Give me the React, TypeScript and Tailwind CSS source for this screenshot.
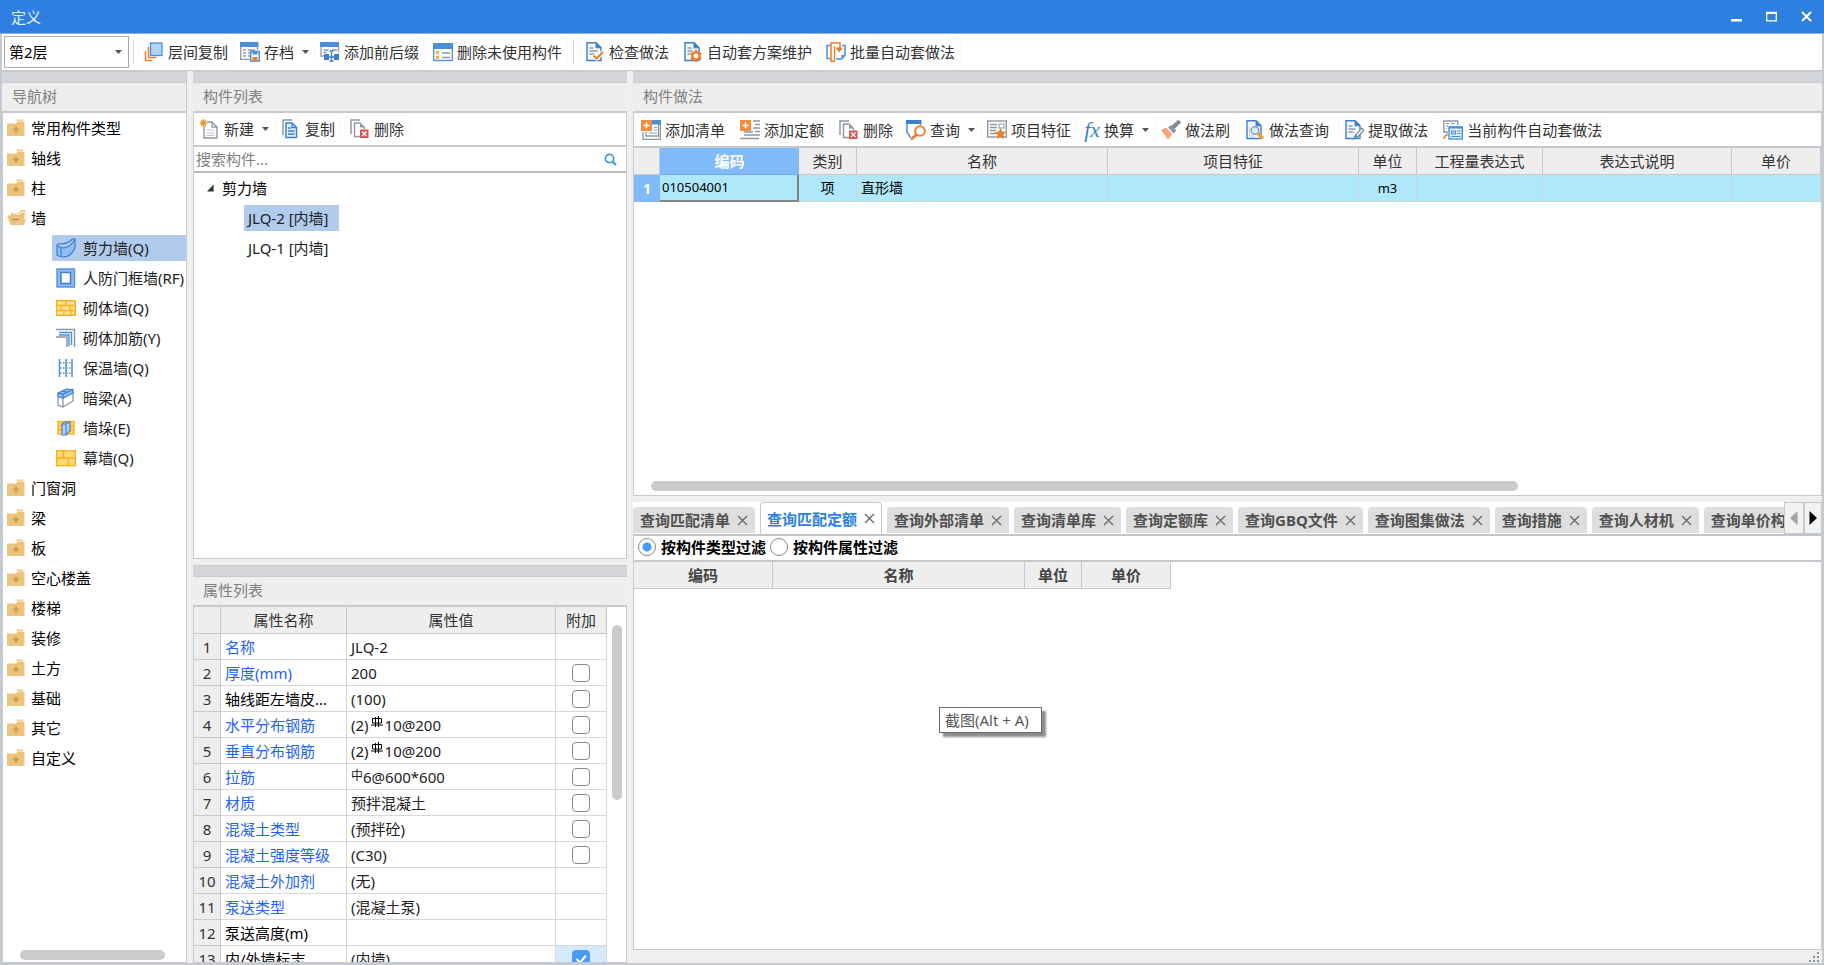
import { ReactNode, useState } from "react";

const Svg = ({ children }: { children: ReactNode }) => (
  <svg viewBox="0 0 20 20" className="w-5 h-5 shrink-0" fill="none" aria-hidden="true">
    {children}
  </svg>
);

/* ---------- toolbar icons ---------- */

const LayerCopyIcon = () => (
  <Svg>
    <path d="M1.500 9v9.500h6.500" stroke="#ee7d2c" strokeWidth="1.500" />
    <path d="M4.500 5v10.500h8" stroke="#ee7d2c" strokeWidth="1.500" />
    <rect x="6.500" y="1" width="11.500" height="12.500" fill="#b5d3fa" stroke="#4a8fdc" strokeWidth="1.300" />
  </Svg>
);

const ArchiveIcon = () => (
  <Svg>
    <path d="M.7 5v12.300h9M17.500 5v3" stroke="#8d99a5" strokeWidth="1.300" />
    <rect x="0" y="0" width="18.500" height="5" fill="#4a8fdc" />
    <path d="M3 8h3M8 8h7M3 11h3M8 11h2M3 14h3M8 14h2" stroke="#8d99a5" strokeWidth="1.300" />
    <path d="M10.700 9.500h8.600v9.500h-8.600z" fill="#fff" stroke="#4a8fdc" strokeWidth="1.500" />
    <path d="M12.500 9.500h5v3h-5z" fill="#4a8fdc" />
    <path d="M12.500 15h5v4h-5z" fill="#ee7d2c" />
  </Svg>
);

const AffixIcon = () => (
  <Svg>
    <path d="M1 5v9h3M18.500 5v5" stroke="#8d99a5" strokeWidth="1.300" />
    <rect x="0" y="0" width="19" height="5" fill="#4a8fdc" />
    <path d="M3.500 8h5M12 8h5M3.500 10.500h3" stroke="#8d99a5" strokeWidth="1.300" />
    <path d="M4 12h5v6H4zM14 12h5v6h-5z" fill="#3c7fcf" />
    <path d="M9.500 9h4M9.500 19h4M11.500 9v10M9 15h5" stroke="#3c7fcf" strokeWidth="1.300" />
  </Svg>
);

const UnusedIcon = () => (
  <Svg>
    <rect x=".7" y="2" width="18.600" height="16.500" stroke="#4a8fdc" strokeWidth="1.300" />
    <rect x="0" y="1" width="20" height="6" fill="#4a8fdc" />
    <path d="M3 9l3 3M6 9l-3 3M3 14l3 3M6 14l-3 3" stroke="#f29a3a" strokeWidth="1.300" />
    <path d="M9 11h8M9 15.500h8" stroke="#8d99a5" strokeWidth="1.500" />
  </Svg>
);

const BluePage = () => (
  <>
    <path d="M2 .8h9l5 5V18.500H2z" fill="#f3f8fe" stroke="#3c7fcf" strokeWidth="1.400" />
    <path d="M11 .8v5h5z" fill="#3c7fcf" stroke="#3c7fcf" />
  </>
);

const CheckDocIcon = () => (
  <Svg>
    <BluePage />
    <path d="M4.500 6h4M4.500 9h8M4.500 12h5" stroke="#8d99a5" strokeWidth="1.300" />
    <path d="M8 13l3.500 3.500L18 10" stroke="#fff" strokeWidth="4" />
    <path d="M8.500 13.500l3 3 6.500-6.500" stroke="#ee7d2c" strokeWidth="2" />
  </Svg>
);

const GearDocIcon = () => (
  <Svg>
    <BluePage />
    <path d="M4.500 6h4M4.500 9h5M4.500 12h3" stroke="#8d99a5" strokeWidth="1.300" />
    <circle cx="13" cy="14" r="3.600" fill="#fff" stroke="#ee7d2c" strokeWidth="2.400" />
    <path
      d="M13 8v2M13 18v2M7.800 11l1.800 1M16.400 16l1.800 1M7.800 17l1.800-1M16.400 12l1.800-1"
      stroke="#ee7d2c"
      strokeWidth="2.400"
    />
  </Svg>
);

const BatchIcon = () => (
  <Svg>
    <path d="M4 3.500H1v13h3M16 3.500h3v10l-3.500 3.500H10" stroke="#4a8fdc" strokeWidth="1.500" />
    <path d="M15.500 17v-4H19z" fill="#4a8fdc" />
    <path d="M9 19.200H5V1h9v5" stroke="#ee7d2c" strokeWidth="1.600" />
    <path d="M8.500 4v15.500" stroke="#ee7d2c" strokeWidth="1.300" />
    <path d="M9.500 5.500h7.500l-3.800 5z" fill="#ee7d2c" />
  </Svg>
);

const NewIcon = () => (
  <Svg>
    <path d="M4 3h8l5 5v11H4z" fill="#fff" stroke="#8d99a5" strokeWidth="1.400" />
    <path d="M12 3v5h5" stroke="#8d99a5" strokeWidth="1.300" />
    <path d="M6.500 11h8M6.500 14h8M6.500 16.500h8" stroke="#c3c9cf" />
    <path d="M0 1h7v6H0z" fill="#fff" />
    <path d="M3.500 0v8M0 4h7M1 1.200l5 5.600M6 1.200L1 6.800" stroke="#f2952c" strokeWidth="1.400" />
  </Svg>
);

const CopyIcon = () => (
  <Svg>
    <path d="M2 16V1h9" stroke="#8d99a5" strokeWidth="1.500" />
    <path d="M5 4h6l4.500 4.500V18.500H5z" fill="#e4f0fe" stroke="#3c7fcf" strokeWidth="1.500" />
    <path d="M11 4v4.500h4.500" stroke="#3c7fcf" strokeWidth="1.300" />
    <path d="M7 9h3M7 12h6.500M7 15h6.500" stroke="#3c7fcf" strokeWidth="1.300" />
  </Svg>
);

const DeleteIcon = () => (
  <Svg>
    <path d="M1 15V1h9" stroke="#8d99a5" strokeWidth="1.500" />
    <path d="M10 17.500H4.500V4H10l4.500 4.500V10" fill="#fff" stroke="#8d99a5" strokeWidth="1.400" />
    <path d="M10 4v4.500h4.500z" fill="#8d99a5" />
    <rect x="10" y="10.500" width="8.500" height="8.500" fill="#d9534f" />
    <path d="M12 12.500l4.500 4.500M16.500 12.500L12 17" stroke="#fff" strokeWidth="1.300" />
  </Svg>
);

const AddListIcon = () => (
  <Svg>
    <path d="M8 1h9.500v15H5v-4" fill="#fff" stroke="#8d99a5" strokeWidth="1.300" />
    <path d="M2 12v7.300h17.300V4" stroke="#8d99a5" strokeWidth="1.300" />
    <path d="M11 0h9v4.500h-9z" fill="#4a8fdc" />
    <path d="M13 7.500h3M13 10h3M8 13h8" stroke="#8d99a5" />
    <rect x="0" y="0" width="11" height="11" fill="#ee8f3c" />
    <path d="M5.500 2.500v6M2.500 5.500h6" stroke="#fff" strokeWidth="1.500" />
  </Svg>
);

const AddQuotaIcon = () => (
  <Svg>
    <path
      d="M13 1h7M15 4.500h5M13 8h7M15 11.500h5M4 15h16M0 18.500h19M4 12h9"
      stroke="#8d99a5"
      strokeWidth="1.400"
    />
    <rect x="0" y="0" width="11" height="11" fill="#ee8f3c" />
    <path d="M5.500 2.500v6M2.500 5.500h6" stroke="#fff" strokeWidth="1.500" />
  </Svg>
);

const QueryIcon = () => (
  <Svg>
    <path d="M1 4v8l3.500 5.500M14.500 4v1" stroke="#4a8fdc" strokeWidth="1.500" />
    <rect x="0" y="0" width="15.500" height="4" fill="#3c7fcf" />
    <circle cx="14" cy="11" r="4.800" fill="#fff" stroke="#ee7d2c" strokeWidth="2" />
    <path d="M10.500 14.500L5 19.500" stroke="#ee7d2c" strokeWidth="2.800" />
  </Svg>
);

const FeatureIcon = () => (
  <Svg>
    <rect x=".7" y="1" width="18.600" height="16" stroke="#8d99a5" strokeWidth="1.400" />
    <path d="M3 4.500h7M3 7.500h7M3 10.500h6M3 13.500h6" stroke="#8d99a5" strokeWidth="1.300" />
    <rect x="12" y="4" width="5" height="4" stroke="#8d99a5" />
    <path
      d="M13.500 8l1.700 3.600 4 .5-2.900 2.800.7 4-3.500-1.900-3.500 1.900.7-4-2.900-2.800 4-.5z"
      fill="#ee7d2c"
    />
  </Svg>
);

const FxIcon = () => (
  <span className="w-4 text-center font-['Liberation_Serif',serif] italic text-[22px] leading-5 text-[#3c7fcf]" aria-hidden="true">
    fx
  </span>
);

const BrushIcon = () => (
  <Svg>
    <path d="M0 10l5-2.500 6.500 6.500L7 19.500 4.500 16z" fill="#fba37c" />
    <path d="M7 7.500l3-2.500 5.500 5.500-3 3z" fill="#8d99a5" />
    <path d="M12 7.500l4-4" stroke="#7d8893" strokeWidth="4" />
    <circle cx="17.300" cy="2.500" r="2.300" fill="#7d8893" />
    <path d="M5.500 7.500l6.500 6.500" stroke="#fff" />
  </Svg>
);

const SearchDocIcon = () => (
  <Svg>
    <BluePage />
    <circle cx="10" cy="10.500" r="3.800" fill="#dcebfc" stroke="#8d99a5" strokeWidth="1.400" />
    <path d="M4.500 7v9h5" stroke="#c3c9cf" />
    <path d="M13 13.500l5 5" stroke="#f2a02c" strokeWidth="3.200" />
  </Svg>
);

const ExtractIcon = () => (
  <Svg>
    <BluePage />
    <path d="M4.500 6h4M4.500 9h7M4.500 12h5" stroke="#8d99a5" strokeWidth="1.300" />
    <path d="M10 19l1.500-4L18 8l2 2-6.500 7z" fill="#fff" stroke="#7d8893" strokeWidth="1.200" />
    <path d="M8 19.500l4-5 2 2z" fill="#2aa5b8" />
  </Svg>
);

const AutoIcon = () => (
  <Svg>
    <path d="M5 12H.8V1h14v4" stroke="#8d99a5" strokeWidth="1.400" />
    <path d="M3 3.500h3M8 3.500h4M3 6h2M3 8.500h1" stroke="#8d99a5" strokeWidth="1.200" />
    <rect x="6" y="7" width="13.300" height="12" fill="#e4f0fe" stroke="#4a8fdc" strokeWidth="1.400" />
    <path d="M6 7.500h13" stroke="#4a8fdc" strokeWidth="2" />
    <rect x="8.500" y="11" width="4" height="3" fill="#b5d3fa" stroke="#4a8fdc" />
    <path d="M14 11h3.500M14 13.500h3.500M8 16.500h9.500" stroke="#4a8fdc" strokeWidth="1.100" />
    <path d="M1 19c0-2 1-3.500 3-4v-1.500" stroke="#ee7d2c" strokeWidth="1.400" />
  </Svg>
);

/* ---------- tree icons ---------- */

const FolderIcon = ({ open }: { open?: boolean }) => (
  <svg viewBox="0 0 20 18" className="w-5 h-[18px] shrink-0" fill="none" aria-hidden="true">
    {open ? (
      <>
        <path d="M4 4h8l2-3h4.500v11l-2 4H4z" fill="#e9bf78" />
        <path d="M5.500 5h8l1.500-2h3v8" stroke="#fff6e2" strokeWidth="1.200" />
        <path d="M0 6.500h16l1.500 9.500h-14z" fill="#ecc47e" />
        <path d="M5 10.500h7" stroke="#b98d3c" strokeWidth="1.500" />
      </>
    ) : (
      <>
        <path d="M0 4.500h9l1.500-2h7V17H0z" fill="#ecc47e" />
        <path d="M9.500 1.200h6.500" stroke="#ecc47e" strokeWidth="1.300" />
        <path d="M9 7.500v6M6 10.500h6" stroke="#c8973f" strokeWidth="1.700" />
      </>
    )}
  </svg>
);

const ShearWallIcon = () => (
  <Svg>
    <path
      d="M1 7.500c3 2 5 2.500 6.500 2.500C13 9.500 16.500 6 19 1v8.500c-2 5-6 9.500-12 9.500-2 0-4-.5-6-2z"
      fill="#8fc0f5"
      stroke="#3c7fcf"
      strokeWidth="1.200"
    />
    <path d="M1 7.500L3 5.500c5 1 10-1 13.500-4.500L19 1" stroke="#3c7fcf" strokeWidth="1.200" />
    <path d="M5 10v8.500" stroke="#3c7fcf" strokeWidth="1.200" />
  </Svg>
);

const DoorFrameIcon = () => (
  <Svg>
    <rect x="1" y="1" width="17.500" height="18" fill="#8fb9ee" stroke="#5b95de" strokeWidth="1.500" />
    <rect x="5" y="4.500" width="9.500" height="11" fill="#fff" stroke="#3c7fcf" strokeWidth="1.500" />
  </Svg>
);

const BrickIcon = () => (
  <Svg>
    <rect x=".7" y="2.700" width="18.600" height="14.600" fill="#ffe199" stroke="#fbb117" strokeWidth="1.400" />
    <path
      d="M1 7.500h18M1 12.500h18M10 3v4.500M5 7.500v5M14 7.500v5M8 12.500V17M15 12.500V17"
      stroke="#fbb117"
      strokeWidth="1.400"
    />
  </Svg>
);

const RebarIcon = () => (
  <Svg>
    <path d="M0 1.500h18.500V19M0 9h11v10" stroke="#8d99a5" strokeWidth="1.500" />
    <path d="M3 4.500h12.500V17M3 7h10v11" stroke="#4a8fdc" strokeWidth="1.400" />
  </Svg>
);

const InsulationIcon = () => (
  <Svg>
    <path d="M3.500 1v18M10 1v18M16 1v18" stroke="#4a8fdc" strokeWidth="1.500" />
    <path d="M4 5h12M4 10h12M4 15h12" stroke="#4a8fdc" strokeDasharray="1.500 1.500" strokeWidth="1.300" />
  </Svg>
);

const BeamIcon = () => (
  <Svg>
    <path d="M2 7l5 1.500V19l-5-2zM7 19l10-6V4" fill="#fff" stroke="#8d99a5" strokeWidth="1.300" />
    <path d="M2 5l8-4 7 .5V5L7 10 2 8.500z" fill="#8fc0f5" stroke="#3c7fcf" strokeWidth="1.200" />
    <path d="M2 5l5 1 10-4.500M7 6v4M6 3l5 1" stroke="#3c7fcf" strokeWidth="1.200" />
  </Svg>
);

const PierIcon = () => (
  <Svg>
    <rect x="2" y="3.500" width="16" height="12.500" fill="#ffd977" stroke="#fbb117" strokeWidth="1.400" />
    <path d="M2 8h16M2 12h16" stroke="#fbb117" strokeWidth="1.400" />
    <path d="M6 6l3-2h5v9l-4 4H6z" fill="#b8d6fa" stroke="#3c7fcf" strokeWidth="1.200" />
    <path d="M6 6h4l4-2M10 6v11" stroke="#3c7fcf" strokeWidth="1.200" />
  </Svg>
);

const CurtainIcon = () => (
  <Svg>
    <rect x=".7" y="2.700" width="18.600" height="15" fill="#ffd977" stroke="#fbb117" strokeWidth="1.400" />
    <path d="M1 10h18M7.500 3v7M12.500 10v7.500" stroke="#fbb117" strokeWidth="1.500" />
  </Svg>
);

/* HRB400 bar sign, has no unicode code point */
const Rebar3 = () => (
  <svg
    viewBox="0 0 12 12"
    className="inline-block w-3 h-3 mx-0.5 mb-2"
    fill="none"
    stroke="#000"
    role="img"
    aria-label="HRB400"
  >
    <path d="M1.500 2.500h9v4.500h-9zM4.500 1v10M7.500 0v11M0 9h12" />
  </svg>
);

const Caret = () => (
  <svg viewBox="0 0 7 4" className="ml-1 w-[7px] h-1 shrink-0" aria-hidden="true">
    <path d="M0 0h7L3.500 4z" fill="#555" />
  </svg>
);

type ToolProps = { icon: ReactNode; label: string; menu?: boolean };

const Tool = ({ icon, label, menu }: ToolProps) => (
  <button
    type="button"
    className={
      menu
        ? "flex items-center gap-1 h-[26px] pl-1 pr-[3px] whitespace-nowrap shrink-0"
        : "flex items-center gap-1 h-[26px] px-[5px] border border-[#f8f8f8] rounded-sm whitespace-nowrap shrink-0"
    }
  >
    {icon}
    {label}
    {menu && <Caret />}
  </button>
);

const PanelTitle = ({ title }: { title: string }) => (
  <div className="shrink-0">
    <div className="h-3 bg-[#d3d5db] border-y border-[#c8cacf]" />
    <h2 className="h-[30px] pl-2.5 leading-[27px] bg-[#eeeeee] text-[#808080] border-b-2 border-[#c6c9cd]">{title}</h2>
  </div>
);

const wallChildren = [
  { label: "剪力墙(Q)", icon: <ShearWallIcon /> },
  { label: "人防门框墙(RF)", icon: <DoorFrameIcon /> },
  { label: "砌体墙(Q)", icon: <BrickIcon /> },
  { label: "砌体加筋(Y)", icon: <RebarIcon /> },
  { label: "保温墙(Q)", icon: <InsulationIcon /> },
  { label: "暗梁(A)", icon: <BeamIcon /> },
  { label: "墙垛(E)", icon: <PierIcon /> },
  { label: "幕墙(Q)", icon: <CurtainIcon /> },
];

const navItems = [
  "常用构件类型",
  "轴线",
  "柱",
  "墙",
  "门窗洞",
  "梁",
  "板",
  "空心楼盖",
  "楼梯",
  "装修",
  "土方",
  "基础",
  "其它",
  "自定义",
];

type Prop = { name: string; value: ReactNode; black?: boolean; extra?: boolean };

const props: Prop[] = [
  { name: "名称", value: "JLQ-2" },
  { name: "厚度(mm)", value: "200", extra: false },
  { name: "轴线距左墙皮...", value: "(100)", black: true, extra: false },
  { name: "水平分布钢筋", value: <>(2)<Rebar3 />10@200</>, extra: false },
  { name: "垂直分布钢筋", value: <>(2)<Rebar3 />10@200</>, extra: false },
  { name: "拉筋", value: <><span className="text-xs align-[3px]">中</span>6@600*600</>, extra: false },
  { name: "材质", value: "预拌混凝土", extra: false },
  { name: "混凝土类型", value: "(预拌砼)", extra: false },
  { name: "混凝土强度等级", value: "(C30)", extra: false },
  { name: "混凝土外加剂", value: "(无)" },
  { name: "泵送类型", value: "(混凝土泵)" },
  { name: "泵送高度(m)", value: "", black: true },
  { name: "内/外墙标志", value: "(内墙)", black: true, extra: true },
];

const tabs = [
  "查询匹配清单",
  "查询匹配定额",
  "查询外部清单",
  "查询清单库",
  "查询定额库",
  "查询GBQ文件",
  "查询图集做法",
  "查询措施",
  "查询人材机",
  "查询单价构成",
];

const NavTree = () => {
  const [active, setActive] = useState("剪力墙(Q)");
  return (
    <nav className="w-[185px] shrink-0 flex flex-col border-r border-[#c6c9cd]">
      <PanelTitle title="导航树" />
      <ul className="flex-1 min-h-0 overflow-hidden bg-white border-l border-[#c6c9cd]">
        {navItems.map((item) => (
          <li key={item}>
            <button type="button" className="flex items-center w-full h-[30px] pl-1 gap-1 text-black">
              <FolderIcon open={item === "墙"} />
              {item}
            </button>
            {item === "墙" && (
              <ul className="pl-[49px]">
                {wallChildren.map((child) => (
                  <li key={child.label} className="h-[30px] py-0.5">
                    <button
                      type="button"
                      onClick={() => setActive(child.label)}
                      className={`flex items-center w-full h-[26px] pl-1 gap-[7px] whitespace-nowrap text-[#222] ${
                        active === child.label ? "bg-[#b1cbed]" : ""
                      }`}
                    >
                      {child.icon}
                      {child.label}
                    </button>
                  </li>
                ))}
              </ul>
            )}
          </li>
        ))}
      </ul>
      <div className="shrink-0 bg-white pl-[17px] pr-[21px] pb-0.5 border-l border-b border-[#c6c9cd]">
        <div className="h-2.5 rounded-full bg-[#cbcbcb]" />
      </div>
    </nav>
  );
};

const ComponentList = () => (
  <section className="h-[488px] shrink-0 flex flex-col">
    <PanelTitle title="构件列表" />
    <div className="flex-1 bg-white border border-t-0 border-[#c6c9cd]">
      <div className="flex items-center gap-[3px] h-[34px] pl-0.5 border-b-2 border-[#c6c9cd]">
        <Tool icon={<NewIcon />} label="新建" menu />
        <Tool icon={<CopyIcon />} label="复制" />
        <Tool icon={<DeleteIcon />} label="删除" />
      </div>
      <div className="flex items-center h-[26px] pl-0.5 pr-[9px] border-b-2 border-[#b9bbbe]">
        <input
          aria-label="搜索构件"
          placeholder="搜索构件..."
          className="flex-1 min-w-0 outline-none placeholder:text-[#808080]"
        />
        <svg viewBox="0 0 13 13" className="w-[13px] h-[13px]" fill="none" stroke="#3d9ad1" aria-hidden="true">
          <circle cx="5.500" cy="5.500" r="4.200" strokeWidth="1.700" />
          <path d="M8.500 8.500l3.500 3.500" strokeWidth="2.200" />
        </svg>
      </div>
      <ul className="text-black">
        <li>
          <button type="button" className="flex items-center h-[30px] pl-[13px] gap-2">
            <svg viewBox="0 0 9 9" className="w-[7px] h-2" aria-hidden="true">
              <path d="M8.500 0v9H0z" fill="#333" />
            </svg>
            剪力墙
          </button>
          <ul className="pl-[50px]">
            <li className="h-[30px] py-0.5">
              <button type="button" className="h-[26px] pl-1 pr-2.5 bg-[#b1cbed] text-[#222]">
                JLQ-2 [内墙]
              </button>
            </li>
            <li className="h-[30px] py-0.5">
              <button type="button" className="h-[26px] pl-1 pr-2.5 text-[#222]">
                JLQ-1 [内墙]
              </button>
            </li>
          </ul>
        </li>
      </ul>
    </div>
  </section>
);

const propHead = "border-r border-b border-[#c6c9cd] p-0 font-normal";
const propCell = "border-r border-b border-[#d5d7da] p-0 whitespace-nowrap";

const PropertyList = () => {
  const [checked, setChecked] = useState(props.map((p) => p.extra === true));
  const toggle = (i: number) => {
    setChecked(checked.map((c, n) => (n === i ? !c : c)));
  };

  return (
    <section className="flex-1 min-h-0 flex flex-col">
      <PanelTitle title="属性列表" />
      <div className="flex-1 min-h-0 flex items-start overflow-hidden bg-white border-x border-b border-[#c6c9cd]">
        <table className="table-fixed w-[413px] shrink-0 border-separate border-spacing-0 text-[#333]">
          <colgroup>
            <col className="w-[27px]" />
            <col className="w-[126px]" />
            <col className="w-[209px]" />
            <col className="w-[51px]" />
          </colgroup>
          <thead>
            <tr className="h-[27px] bg-[#eeeeee]">
              <th className={propHead} />
              <th className={propHead}>属性名称</th>
              <th className={propHead}>属性值</th>
              <th className={propHead}>附加</th>
            </tr>
          </thead>
          <tbody>
            {props.map((p, i) => (
              <tr key={p.name} className="h-[26px]">
                <td className="border-r border-b border-[#c6c9cd] bg-[#eeeeee] p-0 text-center">{i + 1}</td>
                <td className={`${propCell} pl-1 ${p.black ? "text-black" : "text-[#2563f5]"}`}>{p.name}</td>
                <td className={`${propCell} pl-1 text-[#222]`}>
                  <div className="h-5 overflow-visible">{p.value}</div>
                </td>
                <td className={`${propCell} ${p.extra ? "bg-[#d6e8fc]" : ""}`}>
                  {p.extra !== undefined && (
                    <label className="relative block mx-auto w-[18px] h-[18px]">
                      <input
                        type="checkbox"
                        aria-label={p.name}
                        checked={checked[i]}
                        onChange={() => toggle(i)}
                        className="appearance-none block w-[18px] h-[18px] rounded border border-[#8a8a8a] bg-white checked:bg-[#4a9bf8] checked:border-[#4a9bf8]"
                      />
                      {checked[i] && (
                        <svg viewBox="0 0 18 18" className="absolute inset-0 pointer-events-none" fill="none" aria-hidden="true">
                          <path d="M4.500 9l3.500 3.500 6-7" stroke="#fff" strokeWidth="2" />
                        </svg>
                      )}
                    </label>
                  )}
                </td>
              </tr>
            ))}
          </tbody>
        </table>
        <div className="ml-[5px] mt-[18px] w-2.5 h-[175px] rounded-full bg-[#cbcbcb]" />
      </div>
    </section>
  );
};

const headCell = "border-r border-b border-[#c6c9cd] p-0 font-normal";
const bodyCell = "border-r border-b border-[#cdd6da] p-0";

const Practices = () => (
  <section className="h-[425px] shrink-0 flex flex-col">
    <PanelTitle title="构件做法" />
    <div className="flex-1 flex flex-col min-w-0 overflow-hidden bg-white border border-t-0 border-[#c6c9cd]">
      <div className="flex items-center gap-[3px] h-[35px] pl-px border-b-2 border-[#c6c9cd] shrink-0">
        <Tool icon={<AddListIcon />} label="添加清单" />
        <Tool icon={<AddQuotaIcon />} label="添加定额" />
        <Tool icon={<DeleteIcon />} label="删除" />
        <Tool icon={<QueryIcon />} label="查询" menu />
        <Tool icon={<FeatureIcon />} label="项目特征" />
        <Tool icon={<FxIcon />} label="换算" menu />
        <Tool icon={<BrushIcon />} label="做法刷" />
        <Tool icon={<SearchDocIcon />} label="做法查询" />
        <Tool icon={<ExtractIcon />} label="提取做法" />
        <Tool icon={<AutoIcon />} label="当前构件自动套做法" />
      </div>
      <table className="table-fixed w-full border-separate border-spacing-0">
        <colgroup>
          <col className="w-[26px]" />
          <col className="w-[139px]" />
          <col className="w-[58px]" />
          <col className="w-[251px]" />
          <col className="w-[251px]" />
          <col className="w-[58px]" />
          <col className="w-[126px]" />
          <col className="w-[189px]" />
          <col />
        </colgroup>
        <thead>
          <tr className="h-[27px] bg-[#eeeeee]">
            <th className={headCell} />
            <th className="p-0 bg-[#80bafa] border-b border-[#6fa9ec] text-white font-bold">编码</th>
            <th className={headCell}>类别</th>
            <th className={headCell}>名称</th>
            <th className={headCell}>项目特征</th>
            <th className={headCell}>单位</th>
            <th className={headCell}>工程量表达式</th>
            <th className={headCell}>表达式说明</th>
            <th className={headCell}>单价</th>
          </tr>
        </thead>
        <tbody>
          <tr className="h-[27px] bg-[#aee8fa] text-black text-sm">
            <td className="p-0 bg-[#80bafa] text-white text-center font-bold">1</td>
            <td className="p-0 pl-0.5 text-[13px] border-r-2 border-b-2 border-[#808488]">010504001</td>
            <td className={`${bodyCell} text-center`}>项</td>
            <td className={`${bodyCell} pl-1`}>直形墙</td>
            <td className={bodyCell} />
            <td className={`${bodyCell} text-center text-[13px]`}>m3</td>
            <td className={bodyCell} />
            <td className={bodyCell} />
            <td className={bodyCell} />
          </tr>
        </tbody>
      </table>
      <div className="mt-auto mb-1 ml-[17px] w-[73%] h-2.5 rounded-full bg-[#cbcbcb]" />
    </div>
  </section>
);

const QueryPanel = () => {
  const [tab, setTab] = useState("查询匹配定额");
  const [filter, setFilter] = useState("按构件类型过滤");

  return (
    <section className="flex-1 min-h-0 flex flex-col">
      <div className="flex h-[34px] shrink-0 bg-white border-b-2 border-[#c0c5cb]">
        <div role="tablist" className="flex-1 min-w-0 flex items-end gap-[5px] overflow-hidden">
          {tabs.map((t) => (
            <div
              key={t}
              className={
                t === tab
                  ? "flex items-center shrink-0 h-8 px-1.5 gap-[7px] bg-white border border-b-0 border-[#c6c9cd] rounded-t text-[#2b7fe3]"
                  : "flex items-center shrink-0 h-[26px] mb-px px-[7px] gap-[7px] bg-[#dedede] rounded-t text-[#505050]"
              }
            >
              <button type="button" role="tab" aria-selected={t === tab} onClick={() => setTab(t)} className="font-bold whitespace-nowrap">
                {t}
              </button>
              <button type="button" aria-label={`关闭${t}`}>
                <svg viewBox="0 0 11 11" className="w-[11px] h-[11px]" stroke="#6a6a6a" strokeWidth="1.400" aria-hidden="true">
                  <path d="M1 1l9 9M10 1l-9 9" />
                </svg>
              </button>
            </div>
          ))}
        </div>
        <button type="button" aria-label="向左" className="w-5 shrink-0 flex items-center justify-center bg-[#f2f2f2] border border-[#c6c9cd]">
          <svg viewBox="0 0 8 14" className="w-2 h-3.5" aria-hidden="true">
            <path d="M7.500 0v14L0 7z" fill="#a5a5a5" />
          </svg>
        </button>
        <button type="button" aria-label="向右" className="w-[18px] shrink-0 flex items-center justify-center bg-[#f2f2f2] border border-[#c6c9cd]">
          <svg viewBox="0 0 8 14" className="w-2 h-3.5" aria-hidden="true">
            <path d="M.5 0v14L8 7z" fill="#000" />
          </svg>
        </button>
      </div>
      <div className="flex-1 bg-white border-x border-b border-[#c6c9cd]">
        <div className="flex items-center gap-1 h-[26px] pl-1 pb-0.5 border-b-2 border-[#c6c9cd]">
          {["按构件类型过滤", "按构件属性过滤"].map((f) => (
            <label key={f} className="flex items-center gap-[5px] font-bold text-black">
              <input
                type="radio"
                name="filter"
                checked={filter === f}
                onChange={() => setFilter(f)}
                className="appearance-none w-[18px] h-[18px] rounded-full border border-[#8a8a8a] bg-white checked:bg-[radial-gradient(circle,#4a9bf8_4px,white_5px)]"
              />
              {f}
            </label>
          ))}
        </div>
        <table className="table-fixed w-[537px] border-separate border-spacing-0">
          <colgroup>
            <col className="w-[139px]" />
            <col className="w-[252px]" />
            <col className="w-[57px]" />
            <col className="w-[89px]" />
          </colgroup>
          <thead>
            <tr className="h-[27px] bg-[#eeeeee] text-[#444]">
              {["编码", "名称", "单位", "单价"].map((h) => (
                <th key={h} className="border-r border-b border-[#c6c9cd] p-0 font-bold">
                  {h}
                </th>
              ))}
            </tr>
          </thead>
        </table>
      </div>
      <div className="h-[13px] shrink-0 flex items-end justify-end pr-0.5">
        <svg viewBox="0 0 11 11" className="w-[11px] h-[11px]" fill="#8a8d91" aria-hidden="true">
          <path d="M8 0h2v2H8zM4 4h2v2H4zM8 4h2v2H8zM0 8h2v2H0zM4 8h2v2H4zM8 8h2v2H8z" />
        </svg>
      </div>
    </section>
  );
};

const App = () => {
  const [floor, setFloor] = useState("第2层");

  return (
    <div className="relative flex flex-col w-full h-screen overflow-hidden bg-[#efefef] text-[15px] leading-5 text-[#333] font-['Noto_Sans','Noto_Sans_CJK_SC',sans-serif]">
      <header className="flex items-center justify-between h-[34px] shrink-0 pl-[11px] pr-3 bg-[#2d7fe1] text-[#e6f0fc] border-b border-[#9aaecb]">
        <h1>定义</h1>
        <div className="flex gap-6">
          <button type="button" aria-label="最小化">
            <svg viewBox="0 0 11 11" className="w-[11px] h-[11px]" aria-hidden="true">
              <path d="M0 8h11v2.500H0z" fill="#fff" />
            </svg>
          </button>
          <button type="button" aria-label="最大化">
            <svg viewBox="0 0 11 11" className="w-[11px] h-[11px]" fill="none" aria-hidden="true">
              <path d="M.7 1.500h9.600v8.300H.7z" stroke="#fff" strokeWidth="1.300" />
              <path d="M0 1h11v2H0z" fill="#fff" />
            </svg>
          </button>
          <button type="button" aria-label="关闭">
            <svg viewBox="0 0 11 11" className="w-[11px] h-[11px]" stroke="#fff" strokeWidth="2" aria-hidden="true">
              <path d="M1 1l9 9M10 1l-9 9" />
            </svg>
          </button>
        </div>
      </header>

      <div className="flex-1 min-h-0 flex flex-col border-x-2 border-b-2 border-[#c3cad4]">
        <div className="flex items-center h-[37px] shrink-0 gap-0.5 pl-0.5 bg-white border-b border-[#c6c9cd]">
          <div className="relative shrink-0">
            <select
              aria-label="楼层"
              value={floor}
              onChange={(e) => setFloor(e.target.value)}
              className="appearance-none block w-[125px] h-8 pl-1 bg-white border border-[#a9abae] text-black"
            >
              <option>第1层</option>
              <option>第2层</option>
            </select>
            <span className="absolute right-[7px] top-[14px] flex pointer-events-none">
              <Caret />
            </span>
          </div>
          <div className="w-px h-6 ml-0.5 mr-0.5 bg-[#d5d7da]" />
          <Tool icon={<LayerCopyIcon />} label="层间复制" />
          <Tool icon={<ArchiveIcon />} label="存档" menu />
          <Tool icon={<AffixIcon />} label="添加前后缀" />
          <Tool icon={<UnusedIcon />} label="删除未使用构件" />
          <div className="w-px h-6 mx-[3px] bg-[#d5d7da]" />
          <Tool icon={<CheckDocIcon />} label="检查做法" />
          <Tool icon={<GearDocIcon />} label="自动套方案维护" />
          <Tool icon={<BatchIcon />} label="批量自动套做法" />
        </div>

        <main className="flex-1 min-h-0 flex gap-1.5">
          <NavTree />
          <div className="w-[434px] shrink-0 flex flex-col gap-1.5">
            <ComponentList />
            <PropertyList />
          </div>
          <div className="flex-1 min-w-0 flex flex-col gap-1.5">
            <Practices />
            <QueryPanel />
          </div>
        </main>
      </div>

      <div
        role="tooltip"
        className="absolute left-[939px] top-[707px] pl-[5px] pr-3 py-0.5 bg-white border border-[#6b6b6b] text-[#575757] shadow-[4px_4px_2px_rgba(0,0,0,0.45)]"
      >
        截图(Alt + A)
      </div>
    </div>
  );
};

export default App;
